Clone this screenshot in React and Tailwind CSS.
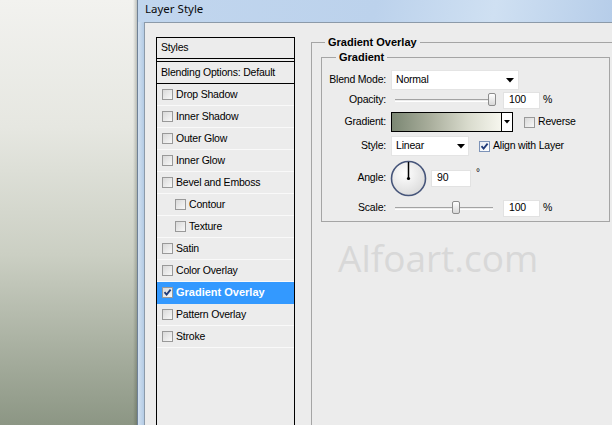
import React from "react";

function Check({ checked = false, blue = false }) {
  return (
    <div
      className={
        "w-[11px] h-[11px] shrink-0 border flex items-center justify-center " +
        (blue
          ? "border-[#7d93b8] bg-[linear-gradient(135deg,#e6ebf3,#ffffff)]"
          : "border-[#999999] bg-[linear-gradient(135deg,#d9d9d9,#f8f8f8)]")
      }
    >
      {checked && (
        <svg width="9" height="9" viewBox="0 0 9 9">
          <path d="M1.5 4.2 L3.6 6.6 L7.6 1.6" fill="none" stroke="#1f3a78" strokeWidth="1.8" />
        </svg>
      )}
    </div>
  );
}

function Arrow() {
  return (
    <svg width="8" height="5" viewBox="0 0 8 5" className="shrink-0">
      <path d="M0 0 L8 0 L4 4.5 Z" fill="#000" />
    </svg>
  );
}

function Row({ label, checked, indent, selected }) {
  return (
    <div
      className={
        "h-[22px] flex items-center border-b " +
        (selected
          ? "bg-[#3399ff] border-[#3399ff] text-white font-bold text-[11px] tracking-[0px]"
          : "border-[#f9f9f9]") +
        (indent ? " pl-[18px]" : " pl-[5px]")
      }
    >
      <Check checked={checked} />
      <span className="ml-[3px]">{label}</span>
    </div>
  );
}

function Slider({ pos }) {
  return (
    <div className="relative w-[98px] h-[3px] border-t border-[#a3a3a3] border-b border-b-[#ffffff] ml-[9px]">
      <div
        className="absolute top-[-7px] w-[8px] h-[13px] rounded-[2px] border border-[#8d8d8d] bg-[linear-gradient(#ffffff,#d8d8d8)]"
        style={{ left: pos }}
      />
    </div>
  );
}

function Field({ w, children, cls = "" }) {
  return (
    <div className={"h-[17px] bg-white border border-[#e2e2e2] flex items-center pl-[5px] " + w + " " + cls}>
      {children}
    </div>
  );
}

export default function App() {
  const rows = [
    ["Drop Shadow"],
    ["Inner Shadow"],
    ["Outer Glow"],
    ["Inner Glow"],
    ["Bevel and Emboss"],
    ["Contour", false, true],
    ["Texture", false, true],
    ["Satin"],
    ["Color Overlay"],
    ["Gradient Overlay", true, false, true],
    ["Pattern Overlay"],
    ["Stroke"],
  ];
  return (
    <div className="w-[612px] h-[425px] flex overflow-hidden font-['Liberation_Sans',Arial,sans-serif] text-[10.5px] tracking-[-0.2px] text-black">
      <div className="w-[137px] h-full flex bg-[linear-gradient(#f2f2ef,#e6e7e1_30%,#cbcfc3_60%,#8c9684)]">
        <div className="flex-1" />
        <div className="w-[4px] h-full bg-[linear-gradient(90deg,rgba(0,0,0,0),rgba(40,50,40,0.25))]" />
      </div>
      <div className="flex-1 flex flex-col border-l border-[#6f8196]">
        <div className="h-[22px] shrink-0 flex items-start pt-[1px] leading-[16px] pl-[7px] bg-[linear-gradient(100deg,#c1d6ee,#bcd2ec_50%,#cfe0f2_75%,#b6cde9)] text-[11.5px] tracking-[0px] font-['Noto_Sans',sans-serif] text-[#0a0a0a]">
          Layer Style
        </div>
        <div className="flex flex-1 min-h-0">
          <div className="w-[6px] bg-[linear-gradient(90deg,#d3e1f0,#b3cbe5)]" />
          <div className="flex-1 flex bg-[#ececec] border-l border-t border-[#8c9aa9] pt-[14px] pl-[11px]">
            <div className="w-[139px] shrink-0 border border-black border-b-0 flex flex-col">
              <div className="h-[21px] flex items-center pl-[4px] border-b border-black">Styles</div>
              <div className="h-[2px]" />
              <div className="h-[23px] flex items-center pl-[4px] border-t border-b border-black">
                Blending Options: Default
              </div>
              {rows.map(([l, c, i, s]) => (
                <Row key={l} label={l} checked={c} indent={i} selected={s} />
              ))}
            </div>
            <div className="flex-1 pl-[16px] pt-[5px] flex flex-col">
              <div className="flex-1 relative border-t border-l border-[#a5a5a5] flex flex-col">
                <span className="absolute top-[-8px] left-[13px] px-[3px] bg-[#ececec] font-bold leading-[14px] text-[11px] tracking-[0px]">
                  Gradient Overlay
                </span>
                <div className="relative ml-[9px] mt-[14px] w-[289px] h-[165px] border border-[#a5a5a5] pt-[12px]">
                  <span className="absolute top-[-8px] left-[14px] px-[3px] bg-[#ececec] font-bold leading-[14px] text-[11px] tracking-[0px]">
                    Gradient
                  </span>
                  <div className="h-[20px] flex items-center">
                    <div className="w-[64px] text-right">Blend Mode:</div>
                    <div className="ml-[5px] w-[128px] h-[20px] bg-white border border-[#e4e4e4] flex items-center pl-[4px] pr-[4px] justify-between">
                      <span>Normal</span>
                      <Arrow />
                    </div>
                  </div>
                  <div className="h-[20px] flex items-center">
                    <div className="w-[64px] text-right">Opacity:</div>
                    <Slider pos="93px" />
                    <Field w="w-[37px]" cls="ml-[10px]">100</Field>
                    <span className="ml-[3px]">%</span>
                  </div>
                  <div className="h-[20px] mt-[2px] flex items-center">
                    <div className="w-[64px] text-right">Gradient:</div>
                    <div className="ml-[5px] w-[122px] h-[20px] border-[1.5px] border-black flex">
                      <div className="flex-1 bg-[linear-gradient(90deg,#7b8773,#a9ae9c_35%,#d9dbcd_70%,#f6f6ee)]" />
                      <div className="w-[11px] bg-white border-l border-black flex items-center justify-center">
                        <svg width="6" height="4" viewBox="0 0 6 4"><path d="M0 0 L6 0 L3 3.5 Z" fill="#000" /></svg>
                      </div>
                    </div>
                    <div className="ml-[11px]"><Check /></div>
                    <span className="ml-[3px]">Reverse</span>
                  </div>
                  <div className="h-[20px] mt-[4px] flex items-center">
                    <div className="w-[64px] text-right">Style:</div>
                    <div className="ml-[5px] w-[78px] h-[20px] bg-white border border-[#e4e4e4] flex items-center pl-[4px] pr-[3px] justify-between">
                      <span>Linear</span>
                      <Arrow />
                    </div>
                    <div className="ml-[10px]"><Check checked blue /></div>
                    <span className="ml-[3px]">Align with Layer</span>
                  </div>
                  <div className="h-[36px] mt-[4px] flex items-center">
                    <div className="w-[64px] text-right">Angle:</div>
                    <svg width="37" height="37" viewBox="0 0 37 37" className="ml-[4px]">
                      <defs>
                        <radialGradient id="dial" cx="0.4" cy="0.35" r="0.7">
                          <stop offset="0" stopColor="#ffffff" />
                          <stop offset="1" stopColor="#dadada" />
                        </radialGradient>
                      </defs>
                      <circle cx="18.5" cy="18.5" r="17" fill="url(#dial)" stroke="#46557a" strokeWidth="1.6" />
                      <line x1="18.5" y1="18.5" x2="18.5" y2="2" stroke="#000" strokeWidth="1.5" />
                      <circle cx="18.5" cy="18.5" r="1.6" fill="#000" />
                    </svg>
                    <Field w="w-[40px]" cls="ml-[4px]">90</Field>
                    <span className="ml-[5px] self-start mt-[5px] text-[10px]">°</span>
                  </div>
                  <div className="h-[20px] mt-[2px] flex items-center">
                    <div className="w-[64px] text-right">Scale:</div>
                    <Slider pos="57px" />
                    <Field w="w-[37px]" cls="ml-[10px]">100</Field>
                    <span className="ml-[3px]">%</span>
                  </div>
                </div>
                <div className="ml-[26px] mt-[16px] text-[37px] leading-[40px] tracking-[0px] font-['Open_Sans',sans-serif] text-[#d8d8d8]">
                  Alfoart.com
                </div>
              </div>
            </div>
          </div>
        </div>
      </div>
    </div>
  );
}
